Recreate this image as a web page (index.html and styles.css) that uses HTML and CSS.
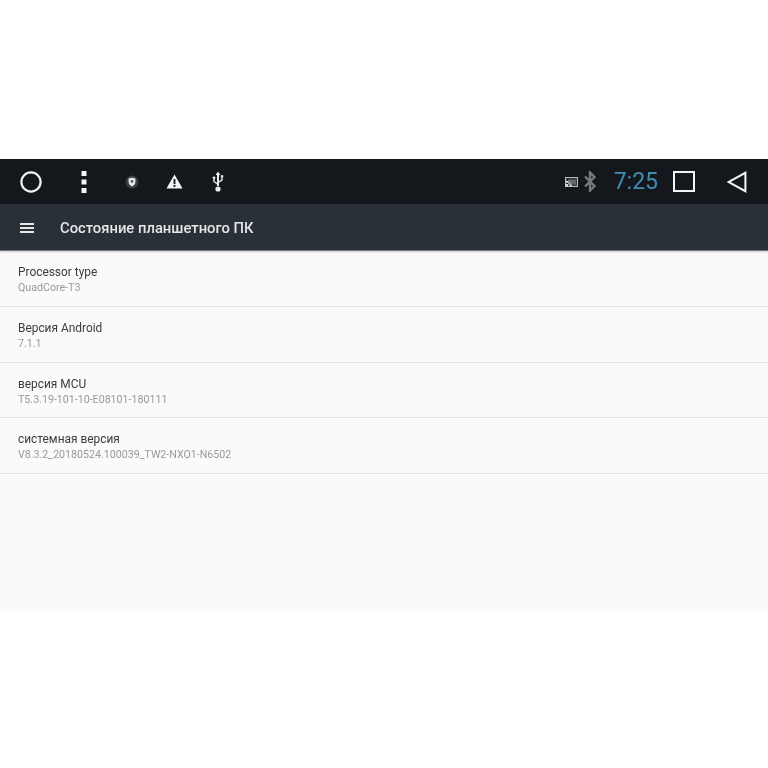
FILE: index.html
```html
<!DOCTYPE html>
<html lang="ru">
<head>
    <meta charset="UTF-8">
    <meta name="viewport" content="width=device-width, initial-scale=1.0">
    <title>Состояние планшетного ПК</title>
    <link rel="stylesheet" href="styles.css">
</head>
<body>

    <div class="screen">
        <!-- Status bar -->
        <div class="status-bar">
            <div class="status-left">
                <svg class="icon-home" width="24" height="24" viewBox="0 0 24 24"><circle cx="12" cy="12" r="9.6" fill="none" stroke="#f2f2f2" stroke-width="2.2"/></svg>
                <svg class="icon-dots" width="8" height="24" viewBox="0 0 8 24"><rect x="1.5" y="1" width="5" height="5" fill="#f4f4f4"/><rect x="1.5" y="9.5" width="5" height="5" fill="#f4f4f4"/><rect x="1.5" y="18" width="5" height="5" fill="#f4f4f4"/></svg>
                <svg class="icon-shield" width="14" height="14" viewBox="0 0 14 14"><circle cx="7" cy="7" r="6.4" fill="#3a3f44"/><path d="M3.6 3.6 L7 2.8 L10.4 3.6 V7 C10.4 9.2 8.6 10.6 7 11.4 C5.4 10.6 3.6 9.2 3.6 7 Z" fill="#e8e8e8"/><circle cx="7" cy="6.4" r="1.3" fill="#555"/></svg>
                <svg class="icon-warn" width="17" height="15" viewBox="0 0 18 16"><path d="M9 0.5 L17.6 15.5 H0.4 Z" fill="#f4f4f4"/><rect x="8" y="5.4" width="2" height="5.4" fill="#14171b"/><rect x="8" y="11.8" width="2" height="2" fill="#14171b"/></svg>
                <svg class="icon-usb" width="12" height="22" viewBox="0 0 12 22"><path d="M6 0.5 L8.4 4 H7 V15 H5 V4 H3.6 Z" fill="#ececec"/><path d="M6 13.5 L2 10.5 V8" fill="none" stroke="#ececec" stroke-width="1.4"/><path d="M6 11.5 L10 9 V6.5" fill="none" stroke="#ececec" stroke-width="1.4"/><circle cx="2" cy="6.8" r="1.4" fill="#ececec"/><rect x="8.8" y="4.2" width="2.4" height="2.4" fill="#ececec"/><circle cx="6" cy="18" r="2.6" fill="#ececec"/></svg>
            </div>
            <div class="status-right">
                <svg class="icon-cast" width="13" height="10" viewBox="0 0 13 10"><rect x="0.6" y="0.6" width="11.8" height="8.8" fill="none" stroke="#b8b8b8" stroke-width="1.2"/><path d="M0.5 3.6 C4 3.6 7 6.4 7 9.6 H5 C5 7.4 3 5.6 0.5 5.6 Z" fill="#d8d8d8"/><rect x="0.5" y="7" width="2.6" height="2.6" fill="#d8d8d8"/><rect x="3" y="2.4" width="8" height="5.4" fill="#8a8a8a" opacity="0.7"/></svg>
                <svg class="icon-bt" width="14" height="21" viewBox="0 0 14 21"><path d="M2 5.5 L11.5 15 L7 19.5 V1.5 L11.5 6 L2 15.5" fill="none" stroke="#77797b" stroke-width="2.4"/></svg>
                <span class="clock">7:25</span>
                <svg class="icon-recent" width="22" height="21" viewBox="0 0 22 21"><rect x="1" y="1" width="20" height="19" fill="none" stroke="#f4f4f4" stroke-width="2"/></svg>
                <svg class="icon-back" width="20" height="22" viewBox="0 0 20 22"><path d="M18.4 1.8 V20.2 L1.8 11 Z" fill="none" stroke="#f4f4f4" stroke-width="2"/></svg>
            </div>
        </div>

        <!-- Action bar -->
        <div class="action-bar">
            <div class="menu-icon"><span></span><span></span><span></span></div>
            <h1>Состояние планшетного ПК</h1>
        </div>

        <!-- Info rows -->
        <div class="info-list">
            <div class="info-row">
                <div class="info-title">Processor type</div>
                <div class="info-value">QuadCore-T3</div>
            </div>
            <div class="info-row">
                <div class="info-title">Версия Android</div>
                <div class="info-value">7.1.1</div>
            </div>
            <div class="info-row">
                <div class="info-title">версия MCU</div>
                <div class="info-value">T5.3.19-101-10-E08101-180111</div>
            </div>
            <div class="info-row">
                <div class="info-title">системная версия</div>
                <div class="info-value">V8.3.2_20180524.100039_TW2-NXO1-N6502</div>
            </div>
        </div>
    </div>

</body>
</html>
```

FILE: styles.css
```css
body {
    margin: 0;
    padding: 0;
    background-color: #fff;
    font-family: 'Roboto', 'Liberation Sans', sans-serif;
}

/* the source photo is soft, so the whole panel gets a slight blur */
.screen {
    margin-top: 159px;
    height: 450px;
    background-color: #fafafa;
    filter: blur(0.4px);
}

.status-bar {
    display: flex;
    justify-content: space-between;
    align-items: center;
    height: 45px;
    background-color: #14171b;
}

.status-left {
    display: flex;
    align-items: center;
    padding-left: 19px;
}

.icon-dots {
    margin-left: 37px;
}

.icon-shield {
    margin-left: 37px;
}

.icon-warn {
    margin-left: 27px;
}

.icon-usb {
    margin-left: 29px;
}

.status-right {
    display: flex;
    align-items: center;
    padding-right: 21px;
}

.icon-bt {
    margin-left: 5px;
}

.clock {
    margin-left: 17px;
    font-size: 23px;
    color: #3f8fb0;
}

.icon-recent {
    margin-left: 15px;
}

.icon-back {
    margin-left: 32px;
}

.action-bar {
    display: flex;
    align-items: center;
    height: 46px;
    background-color: #2a3037;
    border-bottom: 1px solid #777;
    box-shadow: 0 1px 2px rgba(0, 0, 0, 0.2);
}

.menu-icon {
    display: flex;
    flex-direction: column;
    gap: 2px;
    width: 14px;
    margin: 2px 0 0 20px;
}

.menu-icon span {
    display: block;
    height: 2px;
    background-color: #e6e6e6;
}

.action-bar h1 {
    margin: 2px 0 0 26px;
    font-size: 14.8px;
    font-weight: 500;
    color: #e4e6e8;
}

.info-row {
    height: 54.8px;
    padding-left: 18px;
    border-bottom: 1px solid #e2e2e2;
    overflow: hidden;
}

.info-title {
    margin-top: 14px;
    font-size: 11.9px;
    color: #3c3c3c;
}

.info-value {
    margin-top: 2px;
    font-size: 10.65px;
    color: #999;
}
```
